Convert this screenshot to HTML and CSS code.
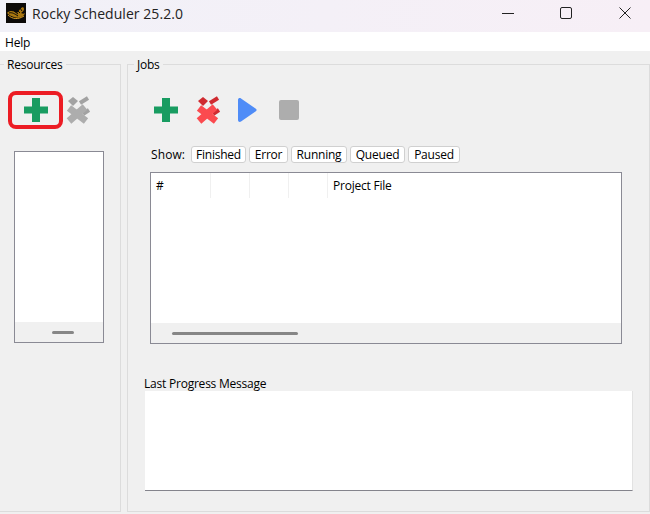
FILE: index.html
```html
<!DOCTYPE html>
<html>
<head>
<meta charset="utf-8">
<title>Rocky Scheduler 25.2.0</title>
<link rel="stylesheet" href="styles.css">
</head>
<body>
<div class="titlebar">
  <svg class="logo" width="20" height="20" viewBox="0 0 20 20">
    <rect width="20" height="20" fill="#0c0a08"/>
    <path d="M1 10C4 7 8 8 11 10C13 8 14 5 17 4C19 6 18 8 15 10C17 11 18 11 19 10C18 14 12 16 8 14C5 13 3 12 1 10Z" fill="#a9760f"/>
    <path d="M3 10C6 9 9 11 12 13M8 8L12 11M11 7L14 10M14 5L16 8" stroke="#0c0a08" stroke-width="1" fill="none"/>
    <path d="M2 12C6 16 12 17 18 13" stroke="#d69a25" stroke-width="1" fill="none"/>
  </svg>
  <span class="app-title">Rocky Scheduler 25.2.0</span>
  <div class="win-controls">
    <svg width="12" height="12" viewBox="0 0 12 12"><path d="M0 6.500H12" stroke="#222" stroke-width="1"/></svg>
    <svg width="12" height="12" viewBox="0 0 12 12"><rect x=".5" y=".5" width="11" height="11" rx="1.500" fill="none" stroke="#222" stroke-width="1"/></svg>
    <svg width="12" height="12" viewBox="0 0 12 12"><path d="M.5 .5L11.500 11.500M11.500 .5L.5 11.500" stroke="#222" stroke-width="1"/></svg>
  </div>
</div>
<div class="menubar"><span>Help</span></div>
<main class="content">
  <section class="group resources">
    <h2 class="group-title res-title">Resources</h2>
    <div class="res-tools">
      <div class="highlight">
        <svg class="icon" width="26" height="26" viewBox="0 0 26 26"><path d="M9 1H17V9.500H25V16.500H17V25H9V16.500H1V9.500H9Z" fill="#189c61"/></svg>
      </div>
      <svg class="icon" width="26" height="28" viewBox="0 0 26 28">
        <path d="M3 5L8 1L13 5L8 10Z" fill="#a2a2a2"/>
        <path d="M15 7L23 2M18 18L24 14" stroke="#a2a2a2" stroke-width="4" fill="none"/>
        <path d="M4 12L21 25M4 25L20 11" stroke="#adadad" stroke-width="7" fill="none"/>
      </svg>
    </div>
    <div class="list-box">
      <div class="list-body"></div>
      <div class="scroll-foot res-foot"><div class="thumb res-thumb"></div></div>
    </div>
  </section>
  <section class="group jobs">
    <h2 class="group-title jobs-title">Jobs</h2>
    <div class="job-tools">
      <svg width="26" height="26" viewBox="0 0 26 26"><path d="M9 1H17V9.500H25V16.500H17V25H9V16.500H1V9.500H9Z" fill="#189c61"/></svg>
      <svg width="26" height="28" viewBox="0 0 26 28">
        <path d="M3 5L8 1L13 5L8 10Z" fill="#cf2a30"/>
        <path d="M15 7L23 2M18 18L24 14" stroke="#cf2a30" stroke-width="4" fill="none"/>
        <path d="M4 12L21 25M4 25L20 11" stroke="#fb4a4f" stroke-width="7" fill="none"/>
      </svg>
      <svg width="20" height="26" viewBox="0 0 20 26"><path d="M1 3C1 1 3 .5 4 1.500L18.500 11.500C20 12.500 20 13.500 18.500 14.500L4 24.500C3 25.500 1 25 1 23Z" fill="#4f8cf7"/></svg>
      <svg width="20" height="20" viewBox="0 0 20 20"><rect width="20" height="20" rx="2" fill="#adadad"/></svg>
    </div>
    <div class="filters">
      <span class="show-label">Show:</span>
      <button class="chip chip-finished">Finished</button>
      <button class="chip chip-error">Error</button>
      <button class="chip chip-running">Running</button>
      <button class="chip chip-queued">Queued</button>
      <button class="chip chip-paused">Paused</button>
    </div>
    <div class="table-box">
      <div class="table-body">
        <div class="table-head">
          <div class="th th-num">#</div>
          <div class="th th-blank"></div>
          <div class="th th-blank"></div>
          <div class="th th-blank"></div>
          <div class="th th-file">Project File</div>
        </div>
      </div>
      <div class="scroll-foot table-foot"><div class="thumb table-thumb"></div></div>
    </div>
    <div class="progress-label">Last Progress Message</div>
    <div class="progress-box"></div>
  </section>
</main>
</body>
</html>
```
FILE: styles.css
```css
* { box-sizing: border-box; }
html, body { margin: 0; height: 514px; overflow: hidden; }
body {
  width: 650px;
  background: #f0f0f0;
  font-family: "Open Sans", "Noto Sans", sans-serif;
  font-size: 12px;
  letter-spacing: -.22px;
  color: #000;
}
.titlebar {
  height: 32px;
  background: linear-gradient(100deg, #f1f1f8, #f7eff6);
  display: flex;
  align-items: center;
  padding: 0 0 6px 6px;
}
.logo { margin-right: 6px; }
.app-title { font-size: 14px; letter-spacing: .05px; color: #222; }
.win-controls {
  margin-left: auto;
  display: flex;
  align-items: center;
  gap: 46px;
  padding-right: 19px;
}
.win-controls svg { display: block; }
.win-controls svg:last-child { margin-left: 1px; }
.menubar {
  height: 19px;
  background: #fff;
  padding-left: 5px;
  line-height: 21px;
}
.content {
  display: flex;
  gap: 6px;
  padding-top: 13px;
  height: 463px;
}
.group {
  position: relative;
  border: 1px solid #dcdcdc;
  height: 448px;
}
.resources { width: 121px; border-left: 0; }
.jobs { width: 523px; }
.group-title {
  position: absolute;
  top: -7px;
  margin: 0;
  background: #f0f0f0;
  font-weight: 400;
  font-size: 12px;
  line-height: 14px;
  padding: 0 3px;
}
.res-title { left: 4px; }
.jobs-title { left: 6px; }
.res-tools {
  display: flex;
  align-items: center;
  padding: 26px 0 0 8px;
}
.highlight {
  width: 55px;
  height: 38px;
  border: 4px solid #ec1c24;
  border-radius: 8px;
  display: flex;
  align-items: center;
  justify-content: center;
  margin-right: 2px;
}
.icon, .job-tools svg { display: block; flex: none; }
.list-box {
  margin: 22px 0 0 14px;
  width: 90px;
  height: 192px;
  border: 1px solid #8a8a94;
  display: flex;
  flex-direction: column;
}
.list-body, .table-body { flex: 1; background: #fff; }
.scroll-foot {
  background: #f0f0f0;
  display: flex;
  align-items: center;
}
.res-foot { height: 20px; padding-left: 37px; }
.table-foot { height: 20px; padding-left: 21px; }
.thumb { height: 3px; border-radius: 2px; background: #868686; }
.res-thumb { width: 22px; }
.table-thumb { width: 126px; }
.job-tools {
  display: flex;
  align-items: center;
  padding: 31px 0 0 25px;
  height: 59px;
}
.job-tools svg:nth-child(2) { margin-left: 16px; }
.job-tools svg:nth-child(3) { margin-left: 16px; }
.job-tools svg:nth-child(4) { margin-left: 22px; }
.filters {
  display: flex;
  align-items: center;
  height: 17px;
  margin-top: 22px;
  padding-left: 23px;
  gap: 3px;
}
.show-label { width: 37px; letter-spacing: .1px; }
.chip {
  height: 17px;
  padding: 0;
  background: #fff;
  border: 1px solid #d0d0d0;
  border-radius: 3px;
  font: inherit;
  letter-spacing: inherit;
  line-height: 14px;
  color: #000;
}
.chip-finished { width: 55px; }
.chip-error { width: 39px; }
.chip-running { width: 56px; }
.chip-queued { width: 55px; }
.chip-paused { width: 52px; }
.table-box {
  margin: 9px 0 0 22px;
  width: 472px;
  height: 172px;
  border: 1px solid #8a8a94;
  display: flex;
  flex-direction: column;
}
.table-head { display: flex; height: 25px; }
.th {
  width: 39px;
  border-right: 1px solid #f0f0f0;
  line-height: 25px;
  padding-left: 5px;
}
.th-num { width: 60px; }
.th-file { width: auto; border-right: 0; }
.progress-label {
  margin: 33px 0 0 16px;
  line-height: 14px;
}
.progress-box {
  margin: 0 0 0 17px;
  width: 488px;
  height: 100px;
  background: #fff;
  border-right: 1px solid #e2e2e2;
  border-bottom: 1px solid #84848c;
}
```
